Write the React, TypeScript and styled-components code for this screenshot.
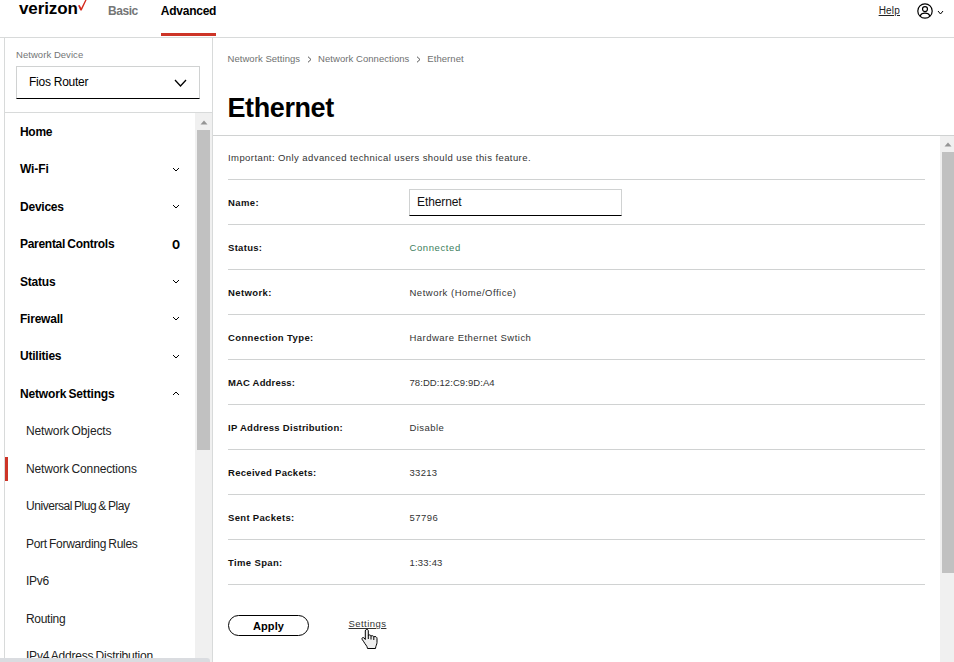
import React from "react";
import styled, { createGlobalStyle } from "styled-components";

const GlobalStyle = createGlobalStyle`
  * { box-sizing: border-box; }
  html, body { margin: 0; height: 100%; overflow: hidden; background: #fff; }
  body { font-family: "Liberation Sans", Arial, sans-serif; color: #000; }
`;

const Page = styled.div`
  width: 954px; height: 662px; overflow: hidden; position: relative;
  display: flex; flex-direction: column;
`;
const Header = styled.header`
  height: 38px; flex: none; display: flex; border-bottom: 1px solid #d8dada;
  padding: 0 10px 0 19px;
`;
const Brand = styled.div`
  width: 89px; display: flex; font-size: 17px; line-height: 17px; font-weight: 700;
  letter-spacing: -0.1px; height: 17px;
  svg { flex: none; margin-left: 0; }
`;
const Tab = styled.a<{ $active?: boolean; $track: number }>`
  height: 36px; margin-right: 23px; line-height: 15px; padding-top: 4px;
  font-size: 12px; font-weight: 700; letter-spacing: ${p => p.$track}px;
  color: ${p => (p.$active ? "#000" : "#747676")};
  border-bottom: 3px solid ${p => (p.$active ? "#cd3427" : "transparent")};
  white-space: nowrap;
`;
const Account = styled.div`
  margin-left: auto; display: flex; align-items: flex-start;
  svg { display: block; }
`;
const Help = styled.a`
  font-size: 10px; letter-spacing: 0.2px; line-height: 13px; margin: 4px 17px 0 0;
  text-decoration: underline; text-underline-offset: 1px; color: #222;
`;
const Caret = styled.span` margin: 10px 0 0 4px; `;
const UserIcon = styled.span` margin-top: 3px; `;
const Body = styled.div` flex: 1; min-height: 0; display: flex; padding-left: 4px; `;
const Sidebar = styled.aside`
  width: 209px; flex: none; display: flex; flex-direction: column;
  border-left: 1px solid #d8dada; border-right: 1px solid #d8dada;
`;
const DeviceBox = styled.div`
  height: 75px; flex: none; padding: 11px 12px 0 11px; border-bottom: 1px solid #d8dada;
`;
const DeviceLabel = styled.div`
  font-size: 9.5px; letter-spacing: 0.05px; line-height: 12px; color: #747676; height: 17px;
`;
const Select = styled.div`
  height: 33px; border: 1px solid #d0d2d2; border-bottom-color: #000;
  display: flex; align-items: center; justify-content: space-between;
  padding: 0 12px; font-size: 12px; letter-spacing: -0.25px; line-height: 15px;
`;
const Scroller = styled.div` flex: 1; min-height: 0; display: flex; overflow: hidden; `;
const Nav = styled.nav` flex: 1; min-width: 0; overflow: hidden; word-spacing: -0.8px; `;
const NavItem = styled.div`
  height: 37.46px; padding: 0 15px; display: flex; align-items: center;
  justify-content: space-between; font-size: 12px; font-weight: 700;
  svg { display: block; }
`;
const Count = styled.span` font: 700 12px Inter, "Liberation Sans", sans-serif; `;
const SubItem = styled.div<{ $active?: boolean }>`
  height: 37.46px; display: flex; align-items: center; font-size: 12px; color: #222;
  &::before {
    content: ""; width: 3px; height: 24px; margin-right: 18px;
    background: ${p => (p.$active ? "#cd3427" : "transparent")};
  }
`;
const Label = styled.span<{ $track: number }>`
  letter-spacing: ${p => p.$track}px; white-space: nowrap;
`;
const Bar = styled.div<{ $w: number; $padR: number; $gap: number }>`
  width: ${p => p.$w}px; flex: none; background: #f0f0f0;
  padding: ${p => p.$gap}px ${p => p.$padR}px 0 2px; display: flex; flex-direction: column; align-items: center;
`;
const Thumb = styled.div<{ $h: number }>`
  width: 100%; height: ${p => p.$h}px; background: #c1c1c1; margin-top: 5px;
`;
const Main = styled.main` flex: 1; min-width: 0; display: flex; flex-direction: column; `;
const Heading = styled.div`
  height: 98px; flex: none; border-bottom: 1px solid #d0d2d2; padding: 14px 0 0 14.5px;
`;
const Crumbs = styled.div`
  display: flex; align-items: center; height: 13px; font-size: 9.5px; color: #6f7171;
  svg { margin: 1px 6.5px 0; display: block; }
`;
const Title = styled.h1`
  margin: 27px 0 0; font-size: 27px; line-height: 32px; letter-spacing: -0.4px; font-weight: 700;
`;
const Content = styled.div` flex: 1; padding: 0 15px 0 15px; `;
const Notice = styled.div`
  height: 44px; display: flex; align-items: center; font-size: 9.5px; color: #333;
  border-bottom: 1px solid #d0d2d2;
`;
const Row = styled.div`
  height: 45px; display: flex; align-items: center; border-bottom: 1px solid #d0d2d2;
  font-size: 9.5px;
`;
const Key = styled.div` width: 181px; font-weight: 700; color: #111; white-space: nowrap; `;
const Value = styled.div<{ $ok?: boolean }>`
  color: ${p => (p.$ok ? "#3d7d5d" : "#333")}; white-space: nowrap; padding-left: 0.5px;
`;
const Field = styled.div`
  width: 213px; height: 27px; border: 1px solid #d0d2d2; border-bottom-color: #000;
  padding: 0 7px; display: flex; align-items: center; font-size: 12px; color: #111;
`;
const Actions = styled.div` display: flex; align-items: flex-start; padding-top: 30px; `;
const Button = styled.button`
  width: 81px; height: 21px; border: 1px solid #000; border-radius: 11px; background: #fff;
  font: 700 11px/19px "Liberation Sans", Arial, sans-serif; padding: 1px 0 0; letter-spacing: 0.1px;
`;
const SettingsLink = styled.a`
  position: relative; margin: 2px 0 0 39.5px; font-size: 9.5px; line-height: 13px;
  text-decoration: underline; text-underline-offset: 1px; color: #333;
`;
const Cursor = styled.span` position: absolute; left: 12.5px; top: 11px; svg { display: block; } `;
const StatusStrip = styled.div`
  position: absolute; left: 0; bottom: 0; width: 210px; height: 4px; background: #dadce0;
  border-top-right-radius: 3px;
`;

const Chevron = ({ up, w = 8, h = 5, s = 1 }: { up?: boolean; w?: number; h?: number; s?: number }) => (
  <svg width={w} height={h} viewBox={`0 0 ${w} ${h}`} fill="none" stroke="#000" strokeWidth={s}>
    <path d={up ? `M1 ${h - 1}L${w / 2} 1L${w - 1} ${h - 1}` : `M1 1L${w / 2} ${h - 1}L${w - 1} 1`} />
  </svg>
);
const Sep = () => (
  <svg width="5" height="7" viewBox="0 0 5 7" fill="none" stroke="#555"><path d="M1 .7L4 3.5L1 6.3" /></svg>
);
const ScrollBar = ({ w, h, padR = 0, gap = 7 }: { w: number; h: number; padR?: number; gap?: number }) => (
  <Bar $w={w} $padR={padR} $gap={gap}>
    <svg width="8" height="5" viewBox="0 0 8 5"><path d="M.5 4.5L4 .5L7.5 4.5Z" fill="#959595" /></svg>
    <Thumb $h={h} />
  </Bar>
);

const nav: [string, number, string][] = [
  ["Home", -0.3, ""], ["Wi-Fi", -0.1, "down"], ["Devices", -0.23, "down"],
  ["Parental Controls", -0.29, "0"], ["Status", -0.2, "down"], ["Firewall", -0.23, "down"],
  ["Utilities", -0.23, "down"], ["Network Settings", -0.17, "up"],
];
const sub: [string, number][] = [
  ["Network Objects", -0.12], ["Network Connections", -0.13], ["Universal Plug & Play", -0.45],
  ["Port Forwarding Rules", -0.3], ["IPv6", -0.3], ["Routing", -0.3], ["IPv4 Address Distribution", -0.22],
];
const rows: [string, number, string, number][] = [
  ["Status:", 0.3, "Connected", 0.6], ["Network:", 0.38, "Network (Home/Office)", 0.5],
  ["Connection Type:", 0.38, "Hardware Ethernet Swtich", 0.48], ["MAC Address:", 0.17, "78:DD:12:C9:9D:A4", 0.07],
  ["IP Address Distribution:", 0.28, "Disable", 0.43], ["Received Packets:", 0.3, "33213", 0.3],
  ["Sent Packets:", 0.32, "57796", 0.45], ["Time Span:", 0.36, "1:33:43", 0.2],
];

export default function App() {
  return (
    <Page>
      <GlobalStyle />
      <Header>
        <Brand>
          <span>verizon</span>
          <svg width="9" height="12" viewBox="0 0 9 12"><path d="M0 5.6L1.7 5.1L3.2 8L7.2 0H8.6L3.7 10.4H2.4Z" fill="#d52b1e" /></svg>
        </Brand>
        <Tab $track={-0.45}>Basic</Tab>
        <Tab $active $track={-0.25}>Advanced</Tab>
        <Account>
          <Help>Help</Help>
          <UserIcon>
            <svg width="16" height="16" viewBox="0 0 16 16" fill="none" stroke="#000" strokeWidth="1.2">
              <circle cx="8" cy="8" r="7.2" /><circle cx="8" cy="6.1" r="2.5" />
              <path d="M3.2 13.1C4 10.7 5.6 10.2 8 10.2S12 10.7 12.8 13.1" />
            </svg>
          </UserIcon>
          <Caret><Chevron w={7} h={5} /></Caret>
        </Account>
      </Header>
      <Body>
        <Sidebar>
          <DeviceBox>
            <DeviceLabel>Network Device</DeviceLabel>
            <Select><span>Fios Router</span><Chevron w={13} h={8} s={1.3} /></Select>
          </DeviceBox>
          <Scroller>
            <Nav>
              {nav.map(([t, k, mark]) => (
                <NavItem key={t}>
                  <Label $track={k}>{t}</Label>
                  {mark === "0" ? <Count>0</Count> : mark && <Chevron up={mark === "up"} />}
                </NavItem>
              ))}
              {sub.map(([t, k]) => (
                <SubItem key={t} $active={t === "Network Connections"}><Label $track={k}>{t}</Label></SubItem>
              ))}
            </Nav>
            <ScrollBar w={17} h={320} padR={2} />
          </Scroller>
        </Sidebar>
        <Main>
          <Heading>
            <Crumbs>
              <Label $track={0.05}>Network Settings</Label><Sep />
              <Label $track={0.05}>Network Connections</Label><Sep />
              <Label $track={0.05}>Ethernet</Label>
            </Crumbs>
            <Title>Ethernet</Title>
          </Heading>
          <Scroller>
            <Content>
              <Notice><Label $track={0.42}>Important: Only advanced technical users should use this feature.</Label></Notice>
              <Row>
                <Key><Label $track={0.38}>Name:</Label></Key>
                <Field><Label $track={-0.1}>Ethernet</Label></Field>
              </Row>
              {rows.map(([k, kt, v, vt]) => (
                <Row key={k}>
                  <Key><Label $track={kt}>{k}</Label></Key>
                  <Value $ok={v === "Connected"}><Label $track={vt}>{v}</Label></Value>
                </Row>
              ))}
              <Actions>
                <Button>Apply</Button>
                <SettingsLink>
                  <Label $track={0.45}>Settings</Label>
                  <Cursor>
                    <svg width="18" height="22" viewBox="0 0 18 22">
                      <path d="M5.2 1.5C6.5 1 7.3 1.8 7.3 3V7.2C8.4 6.6 9.7 7 10 8C11.2 7.3 12.4 7.8 12.8 8.8C14.5 8 16 9 16 10.6V14.5C16 16.4 14.7 17.8 14.5 20.5H6.5C6.3 17.8 3.9 16.2 2.8 13.8L1 11.2C.7 9.6 2 9 3.1 10L4.3 11.5V3C4.3 2.1 4.6 1.7 5.2 1.5Z" fill="#eee" stroke="#000" />
                      <path d="M7.3 7V11M10 8V11.5M12.8 9V12" stroke="#000" fill="none" />
                    </svg>
                  </Cursor>
                </SettingsLink>
              </Actions>
            </Content>
            <ScrollBar w={14} h={421} gap={6} />
          </Scroller>
        </Main>
      </Body>
      <StatusStrip />
    </Page>
  );
}
